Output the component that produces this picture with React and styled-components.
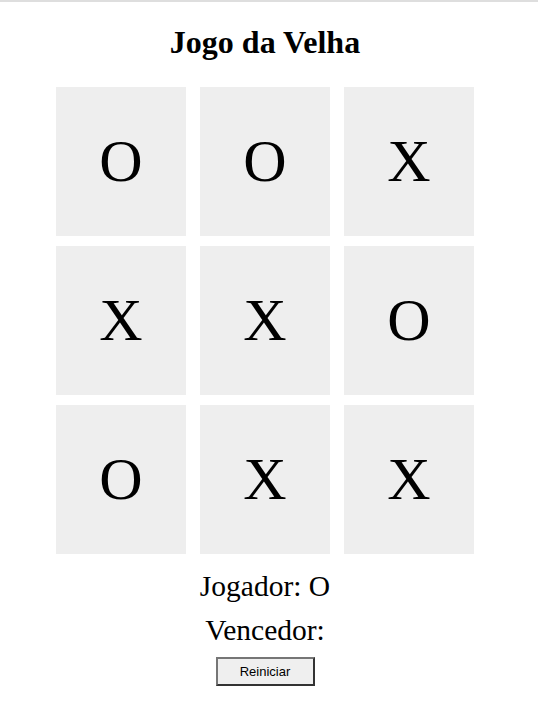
import React, { useState } from "react";
import styled, { createGlobalStyle } from "styled-components";

const GlobalStyle = createGlobalStyle`
    html, body {
        margin: 0;
        padding: 0;
        background: #fff;
    }

    body {
        border-top: 2px solid #dedede;
        font-family: "Liberation Serif", "Times New Roman", serif;
        color: #000;
    }
`;

const Page = styled.div`
    width: 530px;
    text-align: center;
    padding-top: 22px;
`;

const Title = styled.h1`
    margin: 0 0 26px;
    font-size: 32px;
    font-weight: bold;
    line-height: 37px;
`;

const Board = styled.div`
    display: grid;
    grid-template-columns: repeat(3, 130px);
    grid-auto-rows: 149px;
    column-gap: 14px;
    row-gap: 10px;
    justify-content: center;
`;

const Cell = styled.button`
    border: none;
    padding: 0;
    margin: 0;
    background: #eeeeee;
    font-family: "Liberation Serif", "Times New Roman", serif;
    font-size: 60px;
    color: #000;
    cursor: pointer;
    display: flex;
    align-items: center;
    justify-content: center;
`;

const Status = styled.div`
    font-size: 29.5px;
    line-height: 34px;
    margin-top: ${(p) => p.$top}px;
`;

const ResetButton = styled.button`
    display: block;
    margin: 10px auto 0;
    width: 99px;
    height: 29px;
    padding: 0;
    background: #efefef;
    border-width: 2px;
    border-style: solid;
    border-color: #767676 #333 #333 #767676;
    font-family: "Liberation Sans", Arial, sans-serif;
    font-size: 13px;
    color: #000;
`;

const initial = ["O", "O", "X", "X", "X", "O", "O", "X", "X"];

const App = () => {
    const [board, setBoard] = useState(initial);
    const [player, setPlayer] = useState("O");

    const play = (i) => {
        if (board[i]) return;
        const next = [...board];
        next[i] = player;
        setBoard(next);
        setPlayer(player === "X" ? "O" : "X");
    };

    return (
        <>
            <GlobalStyle />
            <Page>
                <Title>Jogo da Velha</Title>
                <Board>
                    {board.map((v, i) => (
                        <Cell key={i} onClick={() => play(i)}>
                            {v}
                        </Cell>
                    ))}
                </Board>
                <Status $top={15}>Jogador: {player}</Status>
                <Status $top={10}>Vencedor: </Status>
                <ResetButton onClick={() => setBoard(Array(9).fill(""))}>Reiniciar</ResetButton>
            </Page>
        </>
    );
};

export default App;
